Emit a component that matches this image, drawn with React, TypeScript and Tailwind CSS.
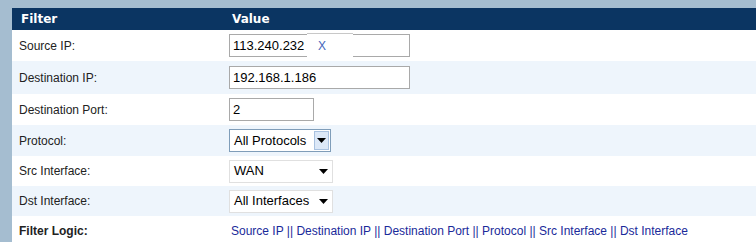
const font = { fontFamily: '"Liberation Sans", Arial, sans-serif' };

function Caret() {
  return (
    <svg width="9" height="5" viewBox="0 0 9 5" className="fill-black">
      <path d="M0 0h9L4.5 5z" />
    </svg>
  );
}

function Row({ label, light, children, bold }: { label: string; light?: boolean; children: React.ReactNode; bold?: boolean }) {
  return (
    <div className={`flex items-center ${light ? 'bg-[#eef5fc]' : 'bg-white'}`}>
      <div className={`w-[216px] pl-[7px] text-[12px] text-[#222] ${bold ? 'font-bold' : ''}`}>{label}</div>
      <div className="flex-1 pl-[1px]">{children}</div>
    </div>
  );
}

export default function App() {
  return (
    <div className="w-[756px] h-[242px] bg-[#a5bdd0] pl-[12px] pt-[8px] overflow-hidden" style={font}>
      <div className="bg-white h-full">
        {/* Header */}
        <div className="flex items-center h-[22px] bg-[#0b3562] text-white font-bold text-[12px] font-['DejaVu_Sans',Verdana,sans-serif]">
          <div className="w-[216px] pl-[9px]">Filter</div>
          <div className="pl-[4px]">Value</div>
        </div>

        <Row label="Source IP:">
          <div className="h-[31px] flex items-center">
            <div className="relative w-[181px] h-[23px] border border-[#a9a9a9] bg-white flex items-center pl-[3px] text-[13px] text-black">
              113.240.232
              <div className="absolute left-[77px] top-[-2px] w-[46px] h-[25px] bg-white border-t border-[#c8c8c8] flex items-center pl-[11px] text-[12px] text-[#4466bb]">
                X
              </div>
            </div>
          </div>
        </Row>

        <Row label="Destination IP:" light>
          <div className="h-[33px] flex items-center">
            <div className="w-[181px] h-[23px] border border-[#a9a9a9] bg-white flex items-center pl-[3px] text-[13px] text-black">
              192.168.1.186
            </div>
          </div>
        </Row>

        <Row label="Destination Port:">
          <div className="h-[31px] flex items-center">
            <div className="w-[85px] h-[23px] border border-[#a9a9a9] bg-white flex items-center pl-[3px] text-[13px] text-black">
              2
            </div>
          </div>
        </Row>

        <Row label="Protocol:" light>
          <div className="h-[31px] flex items-center">
            <div className="w-[102px] h-[23px] border border-[#7f9db9] bg-white flex items-center text-[13px] text-black">
              <span className="flex-1 pl-[4px]">All Protocols</span>
              <span className="w-[15px] h-[19px] mr-[1px] border border-[#a9c2e0] bg-[#dce8f7] flex items-center justify-center">
                <Caret />
              </span>
            </div>
          </div>
        </Row>

        <Row label="Src Interface:">
          <div className="h-[30px] flex items-center">
            <div className="w-[104px] h-[23px] border border-[#e0e0e0] bg-white flex items-center text-[13px] text-black">
              <span className="flex-1 pl-[4px]">WAN</span>
              <span className="w-[18px] flex justify-center"><Caret /></span>
            </div>
          </div>
        </Row>

        <Row label="Dst Interface:" light>
          <div className="h-[30px] flex items-center">
            <div className="w-[104px] h-[23px] border border-[#e0e0e0] bg-white flex items-center text-[13px] text-black">
              <span className="flex-1 pl-[4px]">All Interfaces</span>
              <span className="w-[18px] flex justify-center"><Caret /></span>
            </div>
          </div>
        </Row>

        <Row label="Filter Logic:" bold>
          <div className="h-[30px] flex items-center pl-[2px] text-[12px] text-[#1a2a9a]">
            Source IP || Destination IP || Destination Port || Protocol || Src Interface || Dst Interface
          </div>
        </Row>
      </div>
    </div>
  );
}
